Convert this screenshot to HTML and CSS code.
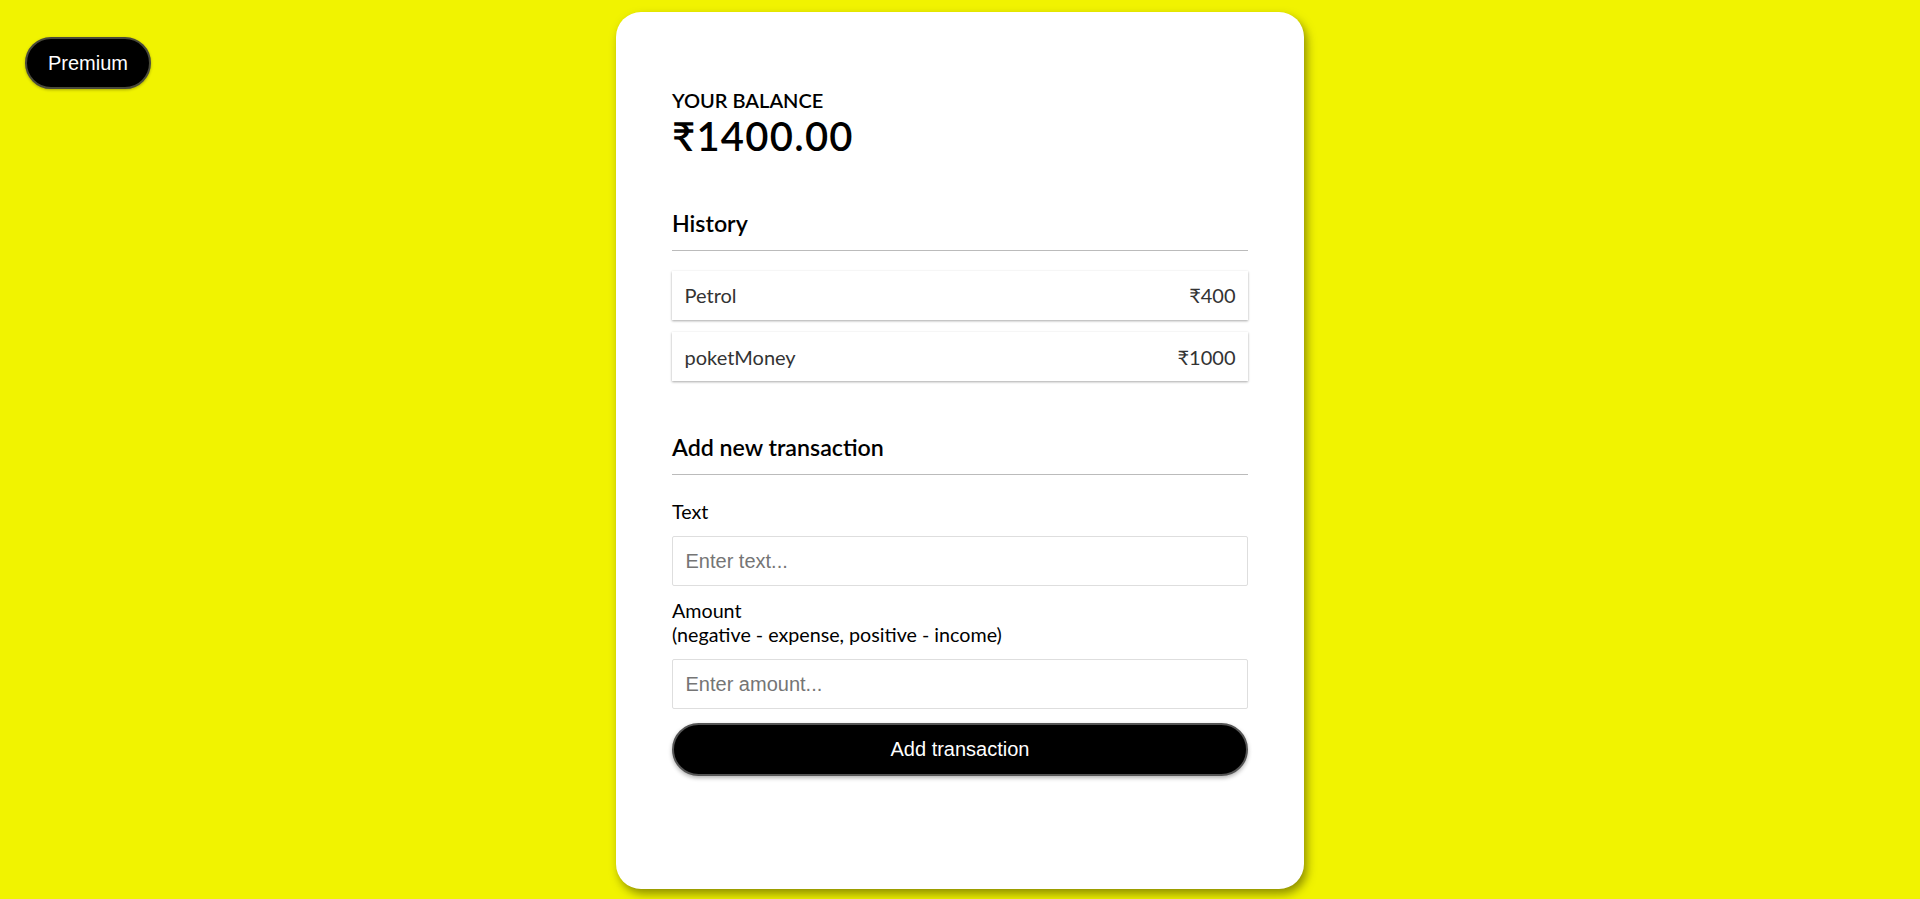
FILE: index.html
```html
<!DOCTYPE html>
<html lang="en">
<head>
<meta charset="UTF-8">
<title>Expense Tracker</title>
<link rel="stylesheet" href="styles.css">
</head>
<body>
<button class="premium">Premium</button>
<main class="card">
  <h4 class="balance-label">Your Balance</h4>
  <h1 class="balance">₹1400.00</h1>

  <h3 class="section-title section-title--first">History</h3>
  <ul class="list">
    <li class="item"><span>Petrol</span><span>₹400</span></li>
    <li class="item"><span>poketMoney</span><span>₹1000</span></li>
  </ul>

  <h3 class="section-title">Add new transaction</h3>
  <form class="form">
    <div class="form-control">
      <label class="label" for="text">Text</label>
      <input class="field" type="text" id="text" placeholder="Enter text...">
    </div>
    <div class="form-control">
      <label class="label" for="amount">Amount <br>(negative - expense, positive - income)</label>
      <input class="field" type="number" id="amount" placeholder="Enter amount...">
    </div>
    <button class="btn" type="button">Add transaction</button>
  </form>
</main>
</body>
</html>
```

FILE: styles.css
```css
* {
  box-sizing: border-box;
}

body {
  margin: 0;
  min-height: 899px;
  background: #f1f300;
  font-family: Lato, "Liberation Sans", sans-serif;
  font-size: 20px;
  padding-top: 12px;
}

.premium {
  position: absolute;
  left: 25px;
  top: 37px;
  background: #000;
  color: #fff;
  font-family: "Liberation Sans", Arial, sans-serif;
  font-size: 20px;
  line-height: 23px;
  padding: 12.5px 21px;
  border: 2px solid #4a4a3a;
  border-radius: 30px;
  box-shadow: 0 1px 3px rgba(0, 0, 0, 0.3);
}

.card {
  width: 688px;
  margin: 0 auto;
  background: #fff;
  border-radius: 25px;
  padding: 75.5px 56px 113px;
  box-shadow: 3px 5px 10px rgba(60, 60, 0, 0.55);
}

.balance-label {
  margin: 0;
  font-size: 20px;
  line-height: 24px;
  font-weight: 600;
  text-transform: uppercase;
  color: #000;
}

.balance {
  margin: 0;
  font-size: 40px;
  line-height: 48px;
  font-weight: 600;
  letter-spacing: 1.25px;
  color: #000;
}

.section-title {
  font-size: 23.2px;
  line-height: 28px;
  font-weight: 600;
  margin: 52px 0 12.5px;
  padding-bottom: 12.5px;
  border-bottom: 1.25px solid #bbb;
  color: #000;
}

.section-title--first {
  margin-top: 49.5px;
}

.list {
  list-style: none;
  padding: 0;
  margin: 20px 0 50px;
}

.item {
  display: flex;
  justify-content: space-between;
  background: #fff;
  color: #333;
  padding: 12.5px;
  margin: 12.5px 0;
  line-height: 24px;
  font-size: 20px;
  box-shadow: 0 1px 3px rgba(0, 0, 0, 0.12), 0 1px 2px rgba(0, 0, 0, 0.24);
}

.form {
  margin: 0;
}

.label {
  display: inline-block;
  margin: 12.5px 0;
  line-height: 24px;
  font-size: 19.7px;
  color: #000;
}

.field {
  display: block;
  width: 100%;
  border: 1.25px solid #dedede;
  border-radius: 2px;
  font-family: "Liberation Sans", Arial, sans-serif;
  font-size: 20px;
  line-height: 23px;
  padding: 12.5px;
  color: #333;
}

.field::placeholder {
  color: #757575;
}

.btn {
  display: block;
  width: 100%;
  margin: 13.5px 0 0;
  padding: 13px 12.5px;
  background: #000;
  color: #fff;
  font-family: "Liberation Sans", Arial, sans-serif;
  font-size: 20px;
  line-height: 23px;
  border: 2px solid #555;
  border-radius: 30px;
  box-shadow: 0 2px 4px rgba(0, 0, 0, 0.3);
}
```
